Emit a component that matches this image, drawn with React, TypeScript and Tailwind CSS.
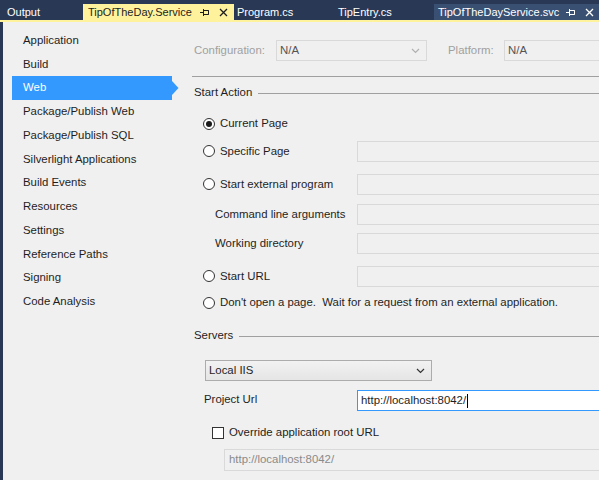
import React from "react";

const font = { fontFamily: '"Liberation Sans", Arial, sans-serif' };

function PinIcon() {
  return (
    <svg width="10" height="9" viewBox="0 0 10 9" className="shrink-0">
      <path d="M0 4.5h3M3.5 1v7M3.5 2.5h5v4h-5M8.5 2.5v4" stroke="currentColor" strokeWidth="1" fill="none" />
    </svg>
  );
}

function CloseIcon() {
  return (
    <svg width="9" height="9" viewBox="0 0 9 9" className="shrink-0">
      <path d="M1 1l7 7M8 1l-7 7" stroke="currentColor" strokeWidth="1.3" fill="none" />
    </svg>
  );
}

function Chevron(props: { color: string }) {
  return (
    <svg width="9" height="6" viewBox="0 0 9 6" className="shrink-0">
      <path d="M1 1l3.5 3.5L8 1" stroke={props.color} strokeWidth="1.2" fill="none" />
    </svg>
  );
}

function Radio(props: { checked?: boolean }) {
  return (
    <span className="flex h-[12px] w-[12px] shrink-0 items-center justify-center rounded-full border border-[#333333] bg-white">
      {props.checked ? <span className="h-[6px] w-[6px] rounded-full bg-[#1a1a1a]" /> : null}
    </span>
  );
}

function Field() {
  return <div className="h-[21px] w-[260px] shrink-0 border border-[#d9d9d9] bg-[#f0f0f0]" />;
}

const navItems = [
  "Application",
  "Build",
  "Web",
  "Package/Publish Web",
  "Package/Publish SQL",
  "Silverlight Applications",
  "Build Events",
  "Resources",
  "Settings",
  "Reference Paths",
  "Signing",
  "Code Analysis"
];

export default function App() {
  return (
    <div className="flex h-[480px] w-[599px] flex-col overflow-hidden bg-[#f0f0f0] text-[11.4px] text-[#1e1e1e]" style={font}>
      {/* document tabs */}
      <div className="flex h-[20px] shrink-0 items-end bg-[#293955] text-[11px] text-white">
        <div className="flex h-[16px] w-[83px] items-center pl-[7px]">Output</div>
        <div className="flex h-[16px] w-[151px] items-center bg-[#fff29d] pl-[5px] text-[#1e1e1e]">
          <span>TipOfTheDay.Service</span>
          <span className="ml-auto flex items-center gap-[9px] pr-[6px]">
            <PinIcon />
            <CloseIcon />
          </span>
        </div>
        <div className="flex h-[16px] w-[100px] items-center pl-[3px]">Program.cs</div>
        <div className="flex h-[16px] w-[100px] items-center pl-[4px]">TipEntry.cs</div>
        <div className="flex h-[16px] flex-1 items-center bg-[#3a5073] pl-[4px]">
          <span>TipOfTheDayService.svc</span>
          <span className="ml-auto flex items-center gap-[9px] pr-[5px]">
            <PinIcon />
            <CloseIcon />
          </span>
        </div>
      </div>
      <div className="h-[2px] shrink-0 bg-[#fff29d]" />

      <div className="flex flex-1">
        <div className="w-[3px] shrink-0 bg-[#293955]" />

        {/* left nav */}
        <div className="w-[189px] shrink-0 pt-[6.5px]">
          {navItems.map((item) =>
            item === "Web" ? (
              <div key={item} className="flex h-[23.75px] items-stretch">
                <div className="ml-[9px] flex w-[160px] items-center bg-[#3399ff] pl-[11px] text-white">{item}</div>
                <svg width="7" height="24" viewBox="0 0 7 24" className="shrink-0">
                  <polygon points="0,5 6.5,12 0,19" fill="#3399ff" />
                </svg>
              </div>
            ) : (
              <div key={item} className="flex h-[23.75px] items-center pl-[20px]">
                {item}
              </div>
            )
          )}
        </div>

        {/* right content */}
        <div className="flex flex-1 flex-col">
          <div className="mt-[18px] flex h-[21px] items-center">
            <span className="w-[84px] pl-[2px] text-[#a0a0a0]">Configuration:</span>
            <div className="flex h-[21px] w-[151px] items-center border border-[#d9d9d9] pl-[3px] pr-[6px] text-[#555555]">
              <span>N/A</span>
              <span className="ml-auto">
                <Chevron color="#b0b0b0" />
              </span>
            </div>
            <span className="ml-[21px] w-[56px] text-[#a0a0a0]">Platform:</span>
            <div className="flex h-[21px] w-[110px] items-center border border-[#d9d9d9] pl-[3px] text-[#555555]">N/A</div>
          </div>

          <div className="mt-[15px] h-px bg-[#a0a0a0]" />

          <div className="mt-[8px] flex h-[16px] items-center pl-[2px]">
            <span>Start Action</span>
            <div className="ml-[6px] h-px flex-1 bg-[#a0a0a0]" />
          </div>

          <div className="mt-[13px] flex h-[20px] items-center gap-[5px] pl-[11px]">
            <Radio checked />
            <span>Current Page</span>
          </div>

          <div className="mt-[7px] flex h-[21px] items-center">
            <div className="flex w-[165px] items-center gap-[5px] pl-[11px]">
              <Radio />
              <span>Specific Page</span>
            </div>
            <Field />
          </div>

          <div className="mt-[12px] flex h-[21px] items-center">
            <div className="flex w-[165px] items-center gap-[5px] pl-[11px]">
              <Radio />
              <span>Start external program</span>
            </div>
            <Field />
          </div>

          <div className="mt-[9px] flex h-[21px] items-center">
            <span className="w-[165px] pl-[23px]">Command line arguments</span>
            <Field />
          </div>

          <div className="mt-[8px] flex h-[21px] items-center">
            <span className="w-[165px] pl-[23px]">Working directory</span>
            <Field />
          </div>

          <div className="mt-[12px] flex h-[21px] items-center">
            <div className="flex w-[165px] items-center gap-[5px] pl-[11px]">
              <Radio />
              <span>Start URL</span>
            </div>
            <Field />
          </div>

          <div className="mt-[6px] flex h-[20px] items-center gap-[5px] pl-[11px]">
            <Radio />
            <span>Don't open a page.&nbsp; Wait for a request from an external application.</span>
          </div>

          <div className="mt-[15px] flex h-[16px] items-center pl-[2px]">
            <span>Servers</span>
            <div className="ml-[6px] h-px flex-1 bg-[#a0a0a0]" />
          </div>

          <div className="ml-[13px] mt-[16px] flex h-[21px] w-[227px] items-center border border-[#acacac] bg-gradient-to-b from-[#f2f2f2] to-[#e5e5e5] pl-[3px] pr-[6px]">
            <span>Local IIS</span>
            <span className="ml-auto">
              <Chevron color="#333333" />
            </span>
          </div>

          <div className="mt-[9px] flex h-[21px] items-start">
            <span className="w-[165px] pl-[12px] pt-[1px]">Project Url</span>
            <div className="flex h-[21px] w-[260px] items-center border border-[#3399ff] bg-white pl-[3px]">
              <span>http://localhost:8042/</span>
              <span className="ml-[1px] h-[14px] w-px bg-black" />
            </div>
          </div>

          <div className="mt-[14px] flex h-[16px] items-center gap-[5px] pl-[20px]">
            <span className="h-[12px] w-[12px] shrink-0 border border-[#333333] bg-white" />
            <span>Override application root URL</span>
          </div>

          <div className="ml-[32px] mt-[8px] flex h-[22px] w-[400px] items-center border border-[#d9d9d9] pl-[4px] text-[#8a8a8a]">
            http://localhost:8042/
          </div>
        </div>
      </div>
    </div>
  );
}
